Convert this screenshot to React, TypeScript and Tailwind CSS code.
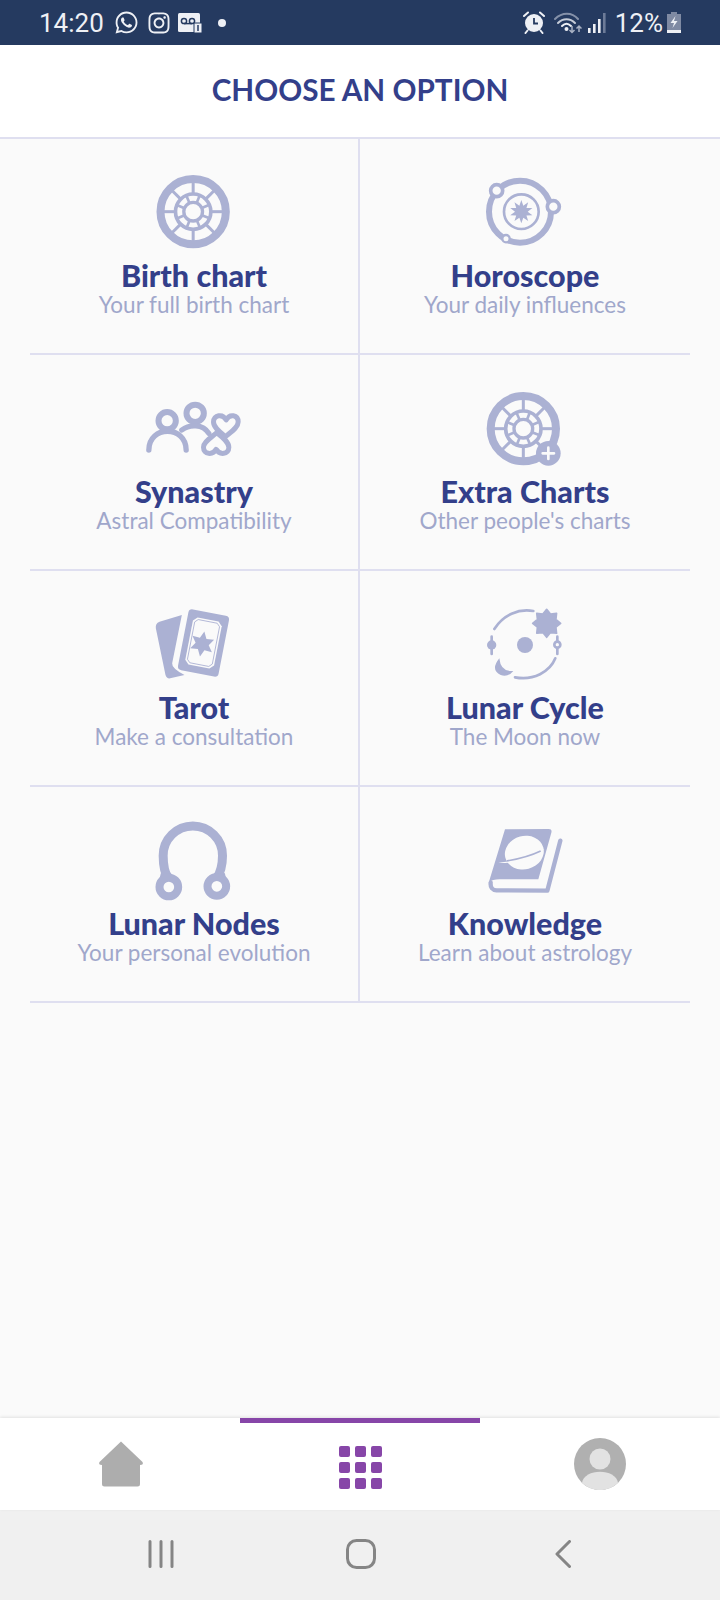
import type { ReactNode } from "react";
import { FaInstagram, FaWhatsapp } from "react-icons/fa";

const ICON = "#abb1d3";
const BG = "#fafafa";

function polar(cx: number, cy: number, r: number, deg: number) {
  const a = (deg * Math.PI) / 180;
  return [cx + r * Math.cos(a), cy + r * Math.sin(a)];
}

function starPoints(cx: number, cy: number, r1: number, r2: number, n: number, start = -90) {
  const pts: string[] = [];
  for (let i = 0; i < n * 2; i++) {
    const [x, y] = polar(cx, cy, i % 2 ? r2 : r1, start + (i * 180) / n);
    pts.push(`${x},${y}`);
  }
  return pts.join(" ");
}

function Wheel({ cx, cy }: { cx: number; cy: number }) {
  const outer = [0, 45, 90, 135, 180, 225, 270, 315];
  const inner = [22, 67, 112, 157, 202, 247, 292, 337];
  return (
    <g transform={`translate(${cx} ${cy})`} stroke={ICON} fill="none">
      <circle r="98" strokeWidth="24" />
      <circle r="53" strokeWidth="11" />
      <circle r="28" strokeWidth="10" />
      {outer.map((d) => {
        const [x1, y1] = polar(0, 0, 53, d);
        const [x2, y2] = polar(0, 0, 95, d);
        return <line key={d} x1={x1} y1={y1} x2={x2} y2={y2} strokeWidth="9" />;
      })}
      {inner.map((d) => {
        const [x1, y1] = polar(0, 0, 28, d);
        const [x2, y2] = polar(0, 0, 53, d);
        return <line key={d} x1={x1} y1={y1} x2={x2} y2={y2} strokeWidth="8" />;
      })}
    </g>
  );
}

function IconBox({ vb, children }: { vb: string; children: ReactNode }) {
  return (
    <svg viewBox={vb} className="h-[100px] w-[140px] shrink-0">
      {children}
    </svg>
  );
}

const BirthIcon = () => (
  <IconBox vb="10.5 3 420 300">
    <Wheel cx={218} cy={155} />
  </IconBox>
);

const HoroscopeIcon = () => (
  <IconBox vb="-15 3 420 300">
    <circle cx="180" cy="155" r="93" fill="none" stroke={ICON} strokeWidth="18" />
    <circle cx="184" cy="155" r="52" fill="none" stroke={ICON} strokeWidth="8" />
    <polygon points={starPoints(184, 155, 35, 19, 10)} fill={ICON} />
    <circle cx="110" cy="92" r="18" fill={BG} stroke={ICON} strokeWidth="11" />
    <circle cx="280" cy="140" r="18" fill={BG} stroke={ICON} strokeWidth="11" />
    <circle cx="138" cy="236" r="11" fill={BG} stroke={ICON} strokeWidth="7" />
  </IconBox>
);

const SynastryIcon = () => (
  <IconBox vb="13.5 -9 420 300">
    <g fill="none" stroke={ICON} strokeLinecap="round" strokeLinejoin="round">
      <circle cx="143" cy="122" r="26" strokeWidth="18" />
      <path d="M88 210 C88 135 200 135 200 210" strokeWidth="16" />
      <circle cx="227" cy="100" r="26" strokeWidth="18" />
      <path d="M187 150 C210 132 250 132 268 160" strokeWidth="16" />
      <path d="M318 170 C300 155 282 142 282 126 C282 104 310 100 320 120 C330 100 356 104 356 126 C356 142 336 155 318 170 Z" strokeWidth="15" />
      <path d="M292 158 C272 175 252 186 252 202 C252 224 280 226 290 208 C300 226 328 224 328 202 C328 186 310 172 292 158 Z" strokeWidth="15" />
    </g>
  </IconBox>
);

const ExtraIcon = () => (
  <IconBox vb="-15 -9 420 300">
    <Wheel cx={190} cy={146} />
    <circle cx="265" cy="220" r="37" fill={ICON} />
    <path d="M265 203 V237 M248 220 H282" stroke={BG} strokeWidth="8" strokeLinecap="round" />
  </IconBox>
);

const TarotIcon = () => (
  <IconBox vb="-16.5 -6 420 300">
    <path d="M90 80 L157 60 L128 205 Q126 220 165 240 L122 250 Q112 252 108 240 L79 100 Q77 85 90 80 Z" fill={ICON} />
    <g transform="rotate(11 222 144)">
      <rect x="160" y="51" width="124" height="186" rx="12" fill={ICON} />
      <polygon points="190,72 254,72 266,84 266,204 254,216 190,216 178,204 178,84" fill={BG} />
      <polygon points="193,78 251,78 260,87 260,201 251,210 193,210 184,201 184,87" fill="none" stroke={ICON} strokeWidth="2.5" />
    </g>
    <polygon points={starPoints(218, 147, 38, 20, 6, -80)} fill={ICON} />
  </IconBox>
);

const LunarCycleIcon = () => (
  <IconBox vb="-45 -6 420 300">
    <circle cx="165" cy="150" r="24" fill={ICON} />
    <g fill="none" stroke={ICON} strokeWidth="8" strokeLinecap="round">
      <path d="M73 102 C100 60 145 40 190 48" />
      <path d="M135 247 C190 258 240 230 256 190" />
      <path d="M65 125 V177" />
      <path d="M262 125 V177" />
    </g>
    <circle cx="65" cy="150" r="14" fill={ICON} />
    <circle cx="262" cy="149" r="9" fill={BG} stroke={ICON} strokeWidth="8" />
    <circle cx="230" cy="85" r="31" fill={ICON} />
    <polygon points={starPoints(230, 85, 42, 30, 8)} fill={ICON} stroke={ICON} strokeWidth="5" strokeLinejoin="round" />
    <path d="M88 190 Q60 225 92 240 Q115 247 130 228 Q92 232 88 190 Z" fill={ICON} />
  </IconBox>
);

const NodesIcon = () => (
  <IconBox vb="-16.5 -3 420 300">
    <path d="M94 190 L118 182 L152 222 L86 222 Z M286 190 L262 182 L228 222 L294 222 Z" fill={ICON} />
    <g fill="none" stroke={ICON}>
      <path d="M118 208 C105 190 101 165 101 137 A88 88 0 0 1 279 137 C279 165 272 190 260 208" strokeWidth="27" />
      <circle cx="118" cy="231" r="28" fill={BG} strokeWidth="24" />
      <circle cx="262" cy="229" r="28" fill={BG} strokeWidth="24" />
    </g>
  </IconBox>
);

const KnowledgeIcon = () => (
  <IconBox vb="-45 -3 420 300">
    <path d="M105 58 L236 57 Q247 57 244 68 L205 208 L88 208 Q68 208 56 218 Z" fill={ICON} />
    <path d="M62 218 Q60 240 80 241 L232 242 L271 92" fill="none" stroke={ICON} strokeWidth="13" strokeLinecap="round" strokeLinejoin="round" />
    <ellipse cx="163" cy="128" rx="59" ry="50" transform="rotate(-15 163 128)" fill={BG} />
    <path d="M85 158 C135 155 185 140 224 116 C190 150 135 163 85 158 Z" fill={BG} />
    <path d="M110 153 C145 147 185 136 212 123" fill="none" stroke={ICON} strokeWidth="5" />
  </IconBox>
);

const items = [
  { title: "Birth chart", sub: "Your full birth chart", icon: <BirthIcon /> },
  { title: "Horoscope", sub: "Your daily influences", icon: <HoroscopeIcon /> },
  { title: "Synastry", sub: "Astral Compatibility", icon: <SynastryIcon /> },
  { title: "Extra Charts", sub: "Other people's charts", icon: <ExtraIcon /> },
  { title: "Tarot", sub: "Make a consultation", icon: <TarotIcon /> },
  { title: "Lunar Cycle", sub: "The Moon now", icon: <LunarCycleIcon /> },
  { title: "Lunar Nodes", sub: "Your personal evolution", icon: <NodesIcon /> },
  { title: "Knowledge", sub: "Learn about astrology", icon: <KnowledgeIcon /> },
];

function StatusBar() {
  return (
    <div className="flex h-[45px] shrink-0 items-center bg-[#253a60] pl-[39px] pr-[39px] font-['Roboto',sans-serif] text-[#eef0f5]">
      <span className="text-[26px] leading-none">14:20</span>
      <FaWhatsapp className="ml-[10px] text-[25px]" />
      <FaInstagram className="ml-[8px] text-[24px]" />
      <svg viewBox="0 0 24 20" className="ml-[7px] h-[20px] w-[24px]">
        <rect x="0" y="0" width="22" height="19" rx="1.5" fill="#eef0f5" />
        <circle cx="6" cy="8" r="2.6" fill="none" stroke="#253a60" strokeWidth="1.5" />
        <circle cx="14" cy="8" r="2.6" fill="none" stroke="#253a60" strokeWidth="1.5" />
        <path d="M6 10.6 H14" stroke="#253a60" strokeWidth="1.5" />
        <rect x="16" y="10" width="8" height="10" fill="#eef0f5" stroke="#253a60" strokeWidth="1" />
        <path d="M20 12 V18" stroke="#253a60" strokeWidth="1.5" />
      </svg>
      <span className="ml-[16px] h-[8px] w-[8px] rounded-full bg-[#eef0f5]" />
      <svg viewBox="0 0 24 24" className="mb-[2px] ml-auto h-[24px] w-[24px]">
        <circle cx="12" cy="13" r="9" fill="#eef0f5" />
        <path d="M12 8 V13.5 H16" fill="none" stroke="#253a60" strokeWidth="1.8" />
        <path d="M2 6 L6 2.5 M22 6 L18 2.5 M5.5 20.5 L3.5 23 M18.5 20.5 L20.5 23" stroke="#eef0f5" strokeWidth="2" strokeLinecap="round" />
      </svg>
      <svg viewBox="0 0 28 22" className="ml-[8px] h-[22px] w-[28px]">
        <g fill="none" strokeLinecap="round" strokeWidth="2">
          <path d="M1 7 C8 0 18 0 24 7" stroke="#8591a9" />
          <path d="M4 11 C9 6 16 6 21 11" stroke="#c6ccd8" />
          <path d="M8 14 C11 11 14 11 17 14" stroke="#eef0f5" />
        </g>
        <circle cx="12.5" cy="17" r="2" fill="#eef0f5" />
        <path d="M18 14 V20 M15.5 18 L18 20.5 L20.5 18" fill="none" stroke="#a9b2c4" strokeWidth="1.5" />
        <path d="M25 20 V14 M22.5 16.5 L25 14 L27.5 16.5" fill="none" stroke="#a9b2c4" strokeWidth="1.5" />
      </svg>
      <svg viewBox="0 0 20 20" className="ml-[5px] h-[20px] w-[20px]">
        <rect x="1" y="15" width="2.6" height="5" fill="#eef0f5" />
        <rect x="6" y="11" width="2.6" height="9" fill="#eef0f5" />
        <rect x="11" y="6" width="2.6" height="14" fill="#eef0f5" />
        <rect x="16" y="0" width="2.6" height="20" fill="#6d7b98" />
      </svg>
      <span className="ml-[8px] text-[26px] leading-none">12%</span>
      <svg viewBox="0 0 14 21" className="ml-[4px] h-[21px] w-[14px]">
        <path d="M4 0 H10 V2 H14 V21 H0 V2 H4 Z" fill="#7f8aa3" />
        <rect x="0" y="18" width="14" height="3" fill="#eef0f5" />
        <path d="M8.5 4 L3.5 11 H7 L5.5 16 L10.5 9 H7 Z" fill="#eef0f5" />
      </svg>
    </div>
  );
}

function BottomNav() {
  return (
    <div className="relative flex h-[92px] shrink-0 bg-white shadow-[0_-1px_3px_rgba(0,0,0,0.1)]">
      <div className="flex flex-1 items-center justify-center">
        <svg viewBox="0 0 46 46" className="ml-[2px] mt-[-1px] h-[46px] w-[46px]">
          <path d="M23 0.5 L44.5 21 Q46 24 42 24 V43 Q42 45.5 39.5 45.5 H6.5 Q4 45.5 4 43 V24 Q0 24 1.5 21 Z" fill="#adadad" />
        </svg>
      </div>
      <div className="flex flex-1 items-center justify-center border-t-[5px] border-[#8746a8]">
        <div className="mt-[1px] grid grid-cols-3 gap-[5px]">
          {Array.from({ length: 9 }).map((_, i) => (
            <span key={i} className="h-[11px] w-[11px] rounded-[2px] bg-[#8746a8]" />
          ))}
        </div>
      </div>
      <div className="flex flex-1 items-center justify-center">
        <svg viewBox="0 0 52 52" className="h-[52px] w-[52px]">
          <circle cx="26" cy="26" r="26" fill="#b0b0b0" />
          <ellipse cx="26" cy="21" rx="10.5" ry="10.5" fill="#e2e2e2" />
          <path d="M8 45 C10 30 42 30 44 45 C38 50 32 52 26 52 C20 52 14 50 8 45 Z" fill="#e2e2e2" />
        </svg>
      </div>
    </div>
  );
}

function SystemNav() {
  return (
    <div className="flex h-[90px] shrink-0 items-center justify-between bg-[#f0f0f0] pb-[2px] pl-[148px] pr-[149px]">
      <svg viewBox="0 0 26 28" className="h-[28px] w-[26px]">
        <path d="M2 1.5 V26.5 M13 1.5 V26.5 M24 1.5 V26.5" stroke="#858585" strokeWidth="3" strokeLinecap="round" />
      </svg>
      <svg viewBox="0 0 30 30" className="-ml-[8px] h-[30px] w-[30px]">
        <rect x="1.5" y="1.5" width="27" height="27" rx="9" fill="none" stroke="#858585" strokeWidth="3" />
      </svg>
      <svg viewBox="0 0 16 28" className="h-[28px] w-[16px]">
        <path d="M14.5 1.5 L2 14 L14.5 26.5" fill="none" stroke="#858585" strokeWidth="3" strokeLinecap="round" strokeLinejoin="round" />
      </svg>
    </div>
  );
}

export default function App() {
  return (
    <div className="flex h-[1600px] w-[720px] flex-col overflow-hidden bg-[#fafafa] font-['Lato',sans-serif]">
      <StatusBar />
      <div className="flex h-[94px] shrink-0 items-center justify-center border-b-2 border-[#dfdff0] bg-white pb-[2px]">
        <h1 className="text-[29.7px] font-bold leading-none text-[#333f8a]">CHOOSE AN OPTION</h1>
      </div>
      <main className="flex-1 px-[30px]">
        <div className="grid grid-cols-2">
          {items.map((item, i) => (
            <div
              key={item.title}
              className={`flex h-[216px] flex-col items-center border-b-2 border-[#dfdff0] pt-[22px] ${i % 2 === 0 ? "border-r-2" : ""}`}
            >
              {item.icon}
              <div className="-mt-[1px] text-[30.5px] font-black leading-[30px] text-[#333f8a]">{item.title}</div>
              <div className="mt-[1px] text-[22.5px] leading-[28px] text-[#a0a7cb]">{item.sub}</div>
            </div>
          ))}
        </div>
      </main>
      <BottomNav />
      <SystemNav />
    </div>
  );
}
